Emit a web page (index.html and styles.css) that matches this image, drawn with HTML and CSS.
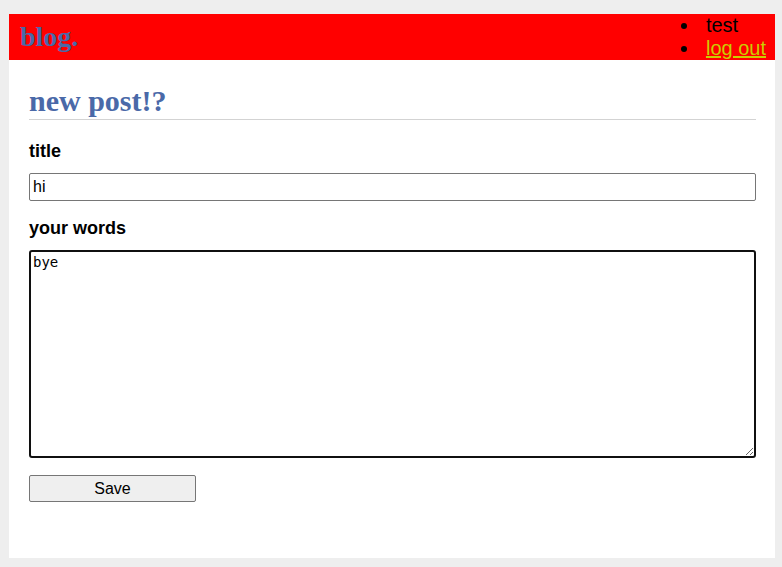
FILE: index.html
```html
<!DOCTYPE html>
<html>
<head>
<meta charset="utf-8">
<title>New Post - blog.</title>
<link rel="stylesheet" href="styles.css">
</head>
<body>
<nav class="topnav">
  <h1 class="brand"><a href="#">blog.</a></h1>
  <ul class="navlist">
    <li><span>test</span></li>
    <li><a href="#">log out</a></li>
  </ul>
</nav>
<section class="content">
  <header class="page-header">
    <h1>new post!?</h1>
  </header>
  <form class="post-form">
    <label for="title">title</label>
    <input class="field" name="title" id="title" value="hi">
    <label for="body">your words</label>
    <textarea class="words" name="body" id="body">bye</textarea>
    <input class="save" type="submit" value="Save">
  </form>
</section>
</body>
</html>
```
FILE: styles.css
```css
html {
  font-family: "Liberation Sans", Arial, sans-serif;
  background: #eeeeee;
  padding: 14px 7px 9px 9px;
  margin: 0;
}
body {
  margin: 0;
  background: #ffffff;
  min-height: 544px;
}
.topnav {
  background: #ff0000;
  display: flex;
  align-items: center;
  padding: 0 9px 0 11px;
  height: 46px;
}
.brand {
  flex: auto;
  margin: 0;
  font-family: "Liberation Serif", "Times New Roman", serif;
  font-size: 28px;
  font-weight: bold;
}
.brand a {
  color: #4a69a8;
  text-decoration: none;
}
.navlist {
  margin: 0;
  padding: 0 0 0 34px;
  font-size: 20px;
  line-height: 23px;
  color: #000000;
}
.navlist li {
  padding-left: 6px;
}
.navlist a {
  color: #cccc00;
}
.content {
  padding: 0 19px 0 20px;
}
.page-header {
  border-bottom: 1px solid #d3d3d3;
}
.page-header h1 {
  margin: 24px 0 1px;
  font-family: "Liberation Serif", "Times New Roman", serif;
  font-size: 30px;
  line-height: 34px;
  color: #4a69a8;
}
.post-form {
  display: flex;
  flex-direction: column;
  margin: 20px 0 0;
}
.post-form label {
  font-weight: bold;
  font-size: 18px;
  line-height: 22px;
  margin-bottom: 11px;
}
.field {
  height: 28px;
  box-sizing: border-box;
  margin: 0 0 16px;
  font-family: "Liberation Sans", Arial, sans-serif;
  font-size: 16px;
  padding: 1px 3px;
  border: 1px solid #767676;
  border-radius: 2px;
}
.words {
  height: 208px;
  box-sizing: border-box;
  margin: 0 0 17px;
  border: 2px solid #101010;
  border-radius: 3px;
  padding: 2px;
  font-family: "DejaVu Sans Mono", monospace;
  font-size: 14px;
  resize: vertical;
}
.save {
  align-self: flex-start;
  width: 167px;
  height: 27px;
  box-sizing: border-box;
  margin: 0;
  font-family: "Liberation Sans", Arial, sans-serif;
  font-size: 16px;
  background: #efefef;
  border: 1px solid #767676;
  border-radius: 2px;
  color: #000000;
}
```
